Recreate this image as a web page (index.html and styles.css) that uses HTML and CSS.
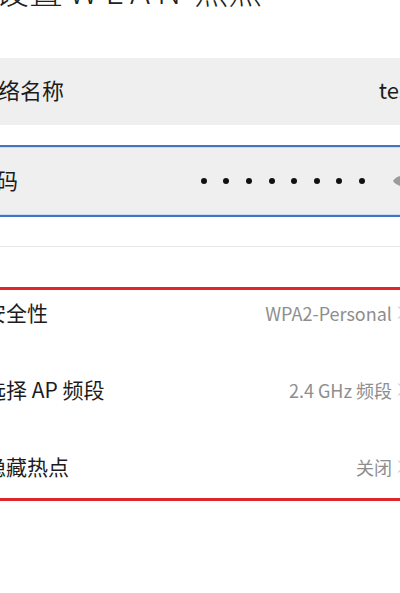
FILE: index.html
```html
<!DOCTYPE html>
<html lang="zh-CN">
<head>
  <meta charset="UTF-8">
  <meta name="viewport" content="width=device-width, initial-scale=1.0">
  <title>设置WLAN热点</title>
  <link rel="stylesheet" href="styles.css">
</head>
<body>

  <div class="page">
    <h1 class="title">设置<span class="title-latin">WLAN</span>热点</h1>

    <!-- Network name -->
    <div class="field">
      <span class="field-label">网络名称</span>
      <span class="field-value">test</span>
    </div>

    <!-- Password (focused) -->
    <div class="field field-focus">
      <span class="field-label">密码</span>
      <span class="dots">
        <i></i><i></i><i></i><i></i><i></i><i></i><i></i><i></i>
      </span>
      <svg class="eye" width="26" height="18" viewBox="0 0 26 18">
        <path d="M1 9 C6 1.5 20 1.5 25 9 C20 16.5 6 16.5 1 9 Z" fill="#9b9b9b"/>
      </svg>
    </div>

    <div class="divider"></div>

    <!-- Settings list -->
    <div class="list">
      <div class="mark"></div>
      <div class="row">
        <span class="row-label">安全性</span>
        <span class="row-value">WPA2-Personal</span>
        <span class="chevron"></span>
      </div>
      <div class="row">
        <span class="row-label">选择 AP 频段</span>
        <span class="row-value">2.4 GHz 频段</span>
        <span class="chevron"></span>
      </div>
      <div class="row">
        <span class="row-label">隐藏热点</span>
        <span class="row-value">关闭</span>
        <span class="chevron"></span>
      </div>
    </div>
  </div>

</body>
</html>
```

FILE: styles.css
```css
/* General */
body {
  margin: 0;
  background: #fff;
  color: #1c1c1c;
  font-family: "Noto Sans CJK SC", "Noto Sans", sans-serif;
  overflow: hidden;
  height: 593px;
}

/* Page is a crop of a wider phone screen */
.page {
  width: 440px;
  margin-left: -20px;
}

.title {
  margin: -30px 0 0 15px;
  font-size: 34px;
  line-height: 40px;
  font-weight: 300;
  color: #222;
}

.title-latin {
  margin: 0 6px;
  letter-spacing: 7px;
}

/* Input fields */
.field {
  display: flex;
  align-items: center;
  justify-content: space-between;
  box-sizing: border-box;
  height: 67px;
  margin-top: 48px;
  background: #efefef;
  font-size: 22px;
}

.field-label {
  margin: 0 0 6px -4px;
}

.field-value {
  margin: 0 3px 6px 0;
}

.field-focus {
  height: 72px;
  margin-top: 20px;
  border-top: 2px solid #4674c4;
  border-bottom: 2px solid #4674c4;
  box-shadow: inset 0 1px 0 #c9dbf2, inset 0 -1px 0 #c9dbf2;
  justify-content: flex-start;
}

.field-focus .field-label {
  margin: 0 0 4px -6px;
}

.dots {
  display: flex;
  gap: 16.6px;
  margin-left: auto;
}

.dots i {
  width: 6px;
  height: 6px;
  border-radius: 50%;
  background: #111;
}

.eye {
  margin: 0 2px 0 27px;
}

.divider {
  height: 1px;
  margin-top: 29px;
  background: #e8e8e8;
}

/* Settings list */
.list {
  position: relative;
  margin-top: 29px;
}

.mark {
  position: absolute;
  top: 11px;
  left: -10px;
  right: 0;
  height: 208px;
  border-top: 3px solid #e0262b;
  border-bottom: 3px solid #e0262b;
}

.row {
  display: flex;
  align-items: center;
  height: 77px;
  padding-left: 5px;
}

.row-label {
  margin-bottom: 6px;
  font-size: 21px;
  color: #1c1c1c;
}

.row-value {
  margin: 0 0 4px auto;
  font-size: 18px;
  color: #8e8e8e;
}

.chevron {
  width: 8px;
  height: 8px;
  margin: 0 17px 4px 2px;
  border-top: 1.5px solid #c4c4c4;
  border-right: 1.5px solid #c4c4c4;
  transform: rotate(45deg);
}
```
